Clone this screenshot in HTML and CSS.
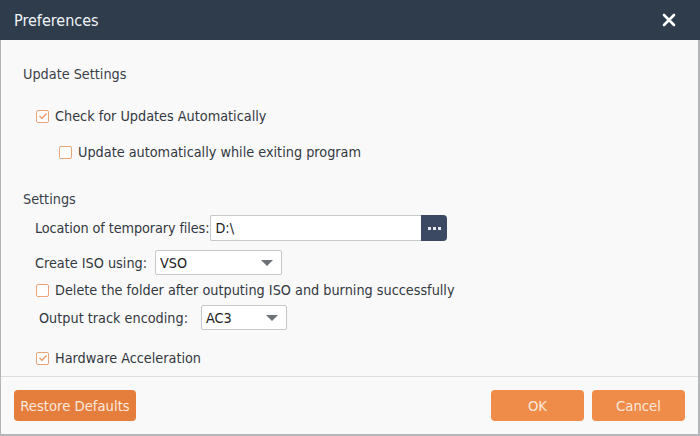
FILE: index.html
```html
<!DOCTYPE html>
<html>
<head>
<meta charset="utf-8">
<link rel="stylesheet" href="styles.css">
</head>
<body>
<div class="dialog">
  <div class="titlebar">
    <span class="title">Preferences</span>
    <svg class="close" width="14" height="14" viewBox="0 0 14 14"><path d="M2 2L12 12M12 2L2 12" stroke="#fff" stroke-width="2.6" stroke-linecap="round"/></svg>
  </div>
  <div class="content">
    <div class="section-title">Update Settings</div>
    <label class="check row-check1"><span class="box checked"><svg width="10" height="10" viewBox="0 0 10 10"><path d="M1.5 5L4 7.5L8.5 2.5" fill="none" stroke="#e8925a" stroke-width="1.2"/></svg></span>Check for Updates Automatically</label>
    <label class="check row-check2"><span class="box"></span>Update automatically while exiting program</label>
    <div class="section-title sec2">Settings</div>
    <div class="field row-loc">
      <span class="lbl tight">Location of temporary files:</span>
      <div class="pathbox"><span class="pathtext">D:\</span><span class="browse"><i></i><i></i><i></i></span></div>
    </div>
    <div class="field row-iso">
      <span class="lbl">Create ISO using:</span>
      <div class="select iso"><span>VSO</span><span class="arrow"></span></div>
    </div>
    <label class="check row-del"><span class="box"></span>Delete the folder after outputing ISO and burning successfully</label>
    <div class="field row-enc">
      <span class="lbl">Output track encoding:</span>
      <div class="select enc"><span>AC3</span><span class="arrow"></span></div>
    </div>
    <label class="check row-hw"><span class="box checked"><svg width="10" height="10" viewBox="0 0 10 10"><path d="M1.5 5L4 7.5L8.5 2.5" fill="none" stroke="#e8925a" stroke-width="1.2"/></svg></span>Hardware Acceleration</label>
  </div>
  <div class="footer">
    <button class="btn restore">Restore Defaults</button>
    <div class="spacer"></div>
    <button class="btn ok">OK</button>
    <button class="btn cancel">Cancel</button>
  </div>
</div>
</body>
</html>
```
FILE: styles.css
```css
* { box-sizing: border-box; }
html, body { margin: 0; padding: 0; }
body {
  width: 700px;
  height: 436px;
  font-family: "DejaVu Sans", sans-serif;
  font-stretch: condensed;
  font-size: 14.3px;
  color: #333840;
  background: #f9f9fa;
}
.dialog {
  width: 700px;
  height: 436px;
  display: flex;
  flex-direction: column;
  border-left: 1px solid #b4b6ba;
  border-right: 2px solid #b4b6ba;
  border-bottom: 2px solid #b4b6ba;
  background: #f9f9fa;
}
.titlebar {
  height: 40px;
  flex: none;
  background: #2e3c4c;
  display: flex;
  align-items: center;
  padding: 0 24px 0 14px;
  margin: 0 -2px 0 -1px;
}
.title {
  color: #f2f4f6;
  font-size: 16px;
  flex: 1;
}
.close { display: block; }
.content {
  flex: 1;
  padding: 26px 0 0 22px;
  display: flex;
  flex-direction: column;
  align-items: flex-start;
  border-bottom: 1px solid #dcdde0;
}
.section-title {
  height: 16px;
  line-height: 16px;
  color: #3a3f47;
}
.check {
  display: flex;
  align-items: center;
  height: 16px;
  line-height: 16px;
}
.box {
  width: 13px;
  height: 13px;
  border: 1px solid #e8a577;
  border-radius: 2px;
  margin-right: 6px;
  display: flex;
  align-items: center;
  justify-content: center;
  background: #fff;
}
.box svg { display: block; }
.row-check1 { margin: 26px 0 0 13px; }
.row-check2 { margin: 20px 0 0 36px; }
.sec2 { margin-top: 31px; }
.field {
  display: flex;
  align-items: center;
}
.tight { letter-spacing: -0.1px; }
.row-loc { margin: 8px 0 0 12px; }
.pathbox {
  display: flex;
  width: 237px;
  height: 26px;
  border: 1px solid #c6c8cc;
  border-right: none;
  background: #fff;
  margin-left: 1px;
  border-radius: 2px 4px 4px 2px;
}
.pathtext {
  flex: 1;
  line-height: 24px;
  padding-left: 4px;
  color: #222;
}
.browse {
  width: 26px;
  height: 26px;
  margin-top: -1px;
  background: #3b4a62;
  border-radius: 0 4px 4px 0;
  display: flex;
  align-items: center;
  justify-content: center;
  gap: 2px;
}
.browse i {
  width: 3px;
  height: 3px;
  background: #e6e9ef;
  display: block;
}
.row-iso { margin: 9px 0 0 12px; }
.select {
  height: 25px;
  border: 1px solid #c6c8cc;
  border-radius: 2px;
  background: #fff;
  display: flex;
  align-items: center;
  padding: 0 8px 0 4px;
  color: #222;
}
.select span:first-child { flex: 1; }
.arrow {
  width: 0;
  height: 0;
  border-left: 6px solid transparent;
  border-right: 6px solid transparent;
  border-top: 6px solid #6d7178;
}
.iso { width: 127px; margin-left: 8px; }
.row-del { margin: 7px 0 0 13px; }
.row-enc { margin: 7px 0 0 16px; }
.enc { width: 86px; margin-left: 13px; }
.row-hw { margin: 20px 0 0 13px; }
.footer {
  flex: none;
  height: 57px;
  display: flex;
  align-items: flex-start;
  padding: 13px 13px 0 13px;
}
.spacer { flex: 1; }
.btn {
  height: 31px;
  border: none;
  border-radius: 4px;
  font-family: "DejaVu Sans", sans-serif;
  font-stretch: condensed;
  font-size: 14.7px;
  color: #fbe8dc;
  background: #f08c4a;
  padding: 0;
}
.restore { width: 122px; background: #e57e3c; }
.ok { width: 93px; }
.cancel { width: 93px; margin-left: 8px; }
```
